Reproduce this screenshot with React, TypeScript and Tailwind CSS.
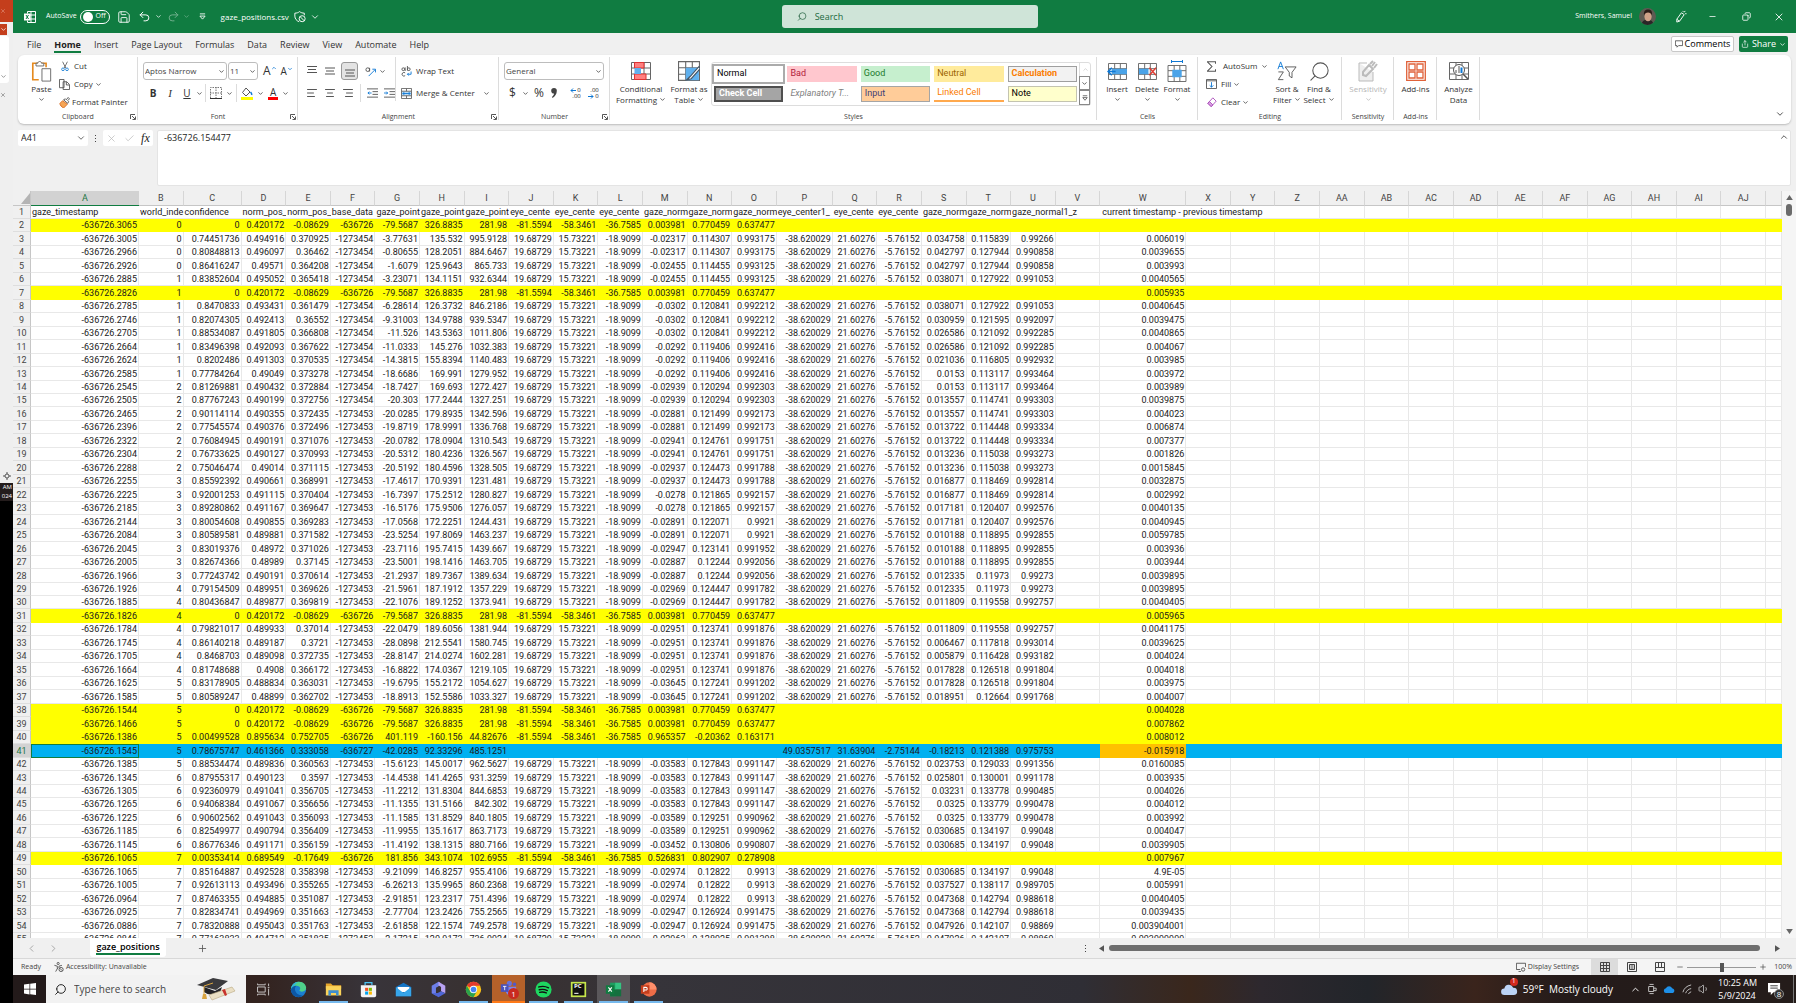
import React from 'react';
import {
  AlignCenter,
  AlignLeft,
  AlignRight,
  ChevronDown,
  ChevronLeft,
  ChevronRight,
  ChevronUp,
  Check,
  Copy,
  Minus,
  Plus,
  Redo2,
  Save,
  Search,
  Share,
  Undo2,
  Volume1,
  X,
} from 'lucide-react';

const YELLOW = 'yellow';
const BLUE = 'blue';

// A B C D E F G H I | M N O | S T U | W   (J-L and P-R are the same on every plain row)
const plainRows: Record<number, string> = {
  3: '-636726.3005 0 0.74451736 0.494916 0.370925 -1273454 -3.77631 135.532 995.9128 -0.02317 0.114307 0.993175 0.034758 0.115839 0.99266 0.006019',
  4: '-636726.2966 0 0.80848813 0.496097 0.36462 -1273454 -0.80655 128.2051 884.6467 -0.02317 0.114307 0.993175 0.042797 0.127944 0.990858 0.0039655',
  5: '-636726.2926 0 0.86416247 0.49571 0.364208 -1273454 -1.6079 125.9643 865.733 -0.02455 0.114455 0.993125 0.042797 0.127944 0.990858 0.003993',
  6: '-636726.2885 1 0.83852604 0.495052 0.365418 -1273454 -3.23071 134.1151 932.6344 -0.02455 0.114455 0.993125 0.038071 0.127922 0.991053 0.0040565',
  8: '-636726.2785 1 0.8470833 0.493431 0.361479 -1273454 -6.28614 126.3732 846.2186 -0.0302 0.120841 0.992212 0.038071 0.127922 0.991053 0.0040645',
  9: '-636726.2746 1 0.82074305 0.492413 0.36552 -1273454 -9.31003 134.9788 939.5347 -0.0302 0.120841 0.992212 0.030959 0.121595 0.992097 0.0039475',
  10: '-636726.2705 1 0.88534087 0.491805 0.366808 -1273454 -11.526 143.5363 1011.806 -0.0302 0.120841 0.992212 0.026586 0.121092 0.992285 0.0040865',
  11: '-636726.2664 1 0.83496398 0.492093 0.367622 -1273454 -11.0333 145.276 1032.383 -0.0292 0.119406 0.992416 0.026586 0.121092 0.992285 0.004067',
  12: '-636726.2624 1 0.8202486 0.491303 0.370535 -1273454 -14.3815 155.8394 1140.483 -0.0292 0.119406 0.992416 0.021036 0.116805 0.992932 0.003985',
  13: '-636726.2585 1 0.77784264 0.49049 0.373278 -1273454 -18.6686 169.991 1279.952 -0.0292 0.119406 0.992416 0.0153 0.113117 0.993464 0.003972',
  14: '-636726.2545 2 0.81269881 0.490432 0.372884 -1273454 -18.7427 169.693 1272.427 -0.02939 0.120294 0.992303 0.0153 0.113117 0.993464 0.003989',
  15: '-636726.2505 2 0.87767243 0.490199 0.372756 -1273454 -20.303 177.2444 1327.251 -0.02939 0.120294 0.992303 0.013557 0.114741 0.993303 0.0039875',
  16: '-636726.2465 2 0.90114114 0.490355 0.372435 -1273453 -20.0285 179.8935 1342.596 -0.02881 0.121499 0.992173 0.013557 0.114741 0.993303 0.004023',
  17: '-636726.2396 2 0.77545574 0.490376 0.372496 -1273453 -19.8719 178.9991 1336.768 -0.02881 0.121499 0.992173 0.013722 0.114448 0.993334 0.006874',
  18: '-636726.2322 2 0.76084945 0.490191 0.371076 -1273453 -20.0782 178.0904 1310.543 -0.02941 0.124761 0.991751 0.013722 0.114448 0.993334 0.007377',
  19: '-636726.2304 2 0.76733625 0.490127 0.370993 -1273453 -20.5312 180.4236 1326.567 -0.02941 0.124761 0.991751 0.013236 0.115038 0.993273 0.001826',
  20: '-636726.2288 2 0.75046474 0.49014 0.371115 -1273453 -20.5192 180.4596 1328.505 -0.02937 0.124473 0.991788 0.013236 0.115038 0.993273 0.0015845',
  21: '-636726.2255 3 0.85592392 0.490661 0.368991 -1273453 -17.4617 170.9391 1231.481 -0.02937 0.124473 0.991788 0.016877 0.118469 0.992814 0.0032875',
  22: '-636726.2225 3 0.92001253 0.491115 0.370404 -1273453 -16.7397 175.2512 1280.827 -0.0278 0.121865 0.992157 0.016877 0.118469 0.992814 0.002992',
  23: '-636726.2185 3 0.89280862 0.491167 0.369647 -1273453 -16.5176 175.9506 1276.057 -0.0278 0.121865 0.992157 0.017181 0.120407 0.992576 0.0040135',
  24: '-636726.2144 3 0.80054608 0.490855 0.369283 -1273453 -17.0568 172.2251 1244.431 -0.02891 0.122071 0.9921 0.017181 0.120407 0.992576 0.0040945',
  25: '-636726.2084 3 0.80589581 0.489881 0.371582 -1273453 -23.5254 197.8069 1463.237 -0.02891 0.122071 0.9921 0.010188 0.118895 0.992855 0.0059785',
  26: '-636726.2045 3 0.83019376 0.48972 0.371026 -1273453 -23.7116 195.7415 1439.667 -0.02947 0.123141 0.991952 0.010188 0.118895 0.992855 0.003936',
  27: '-636726.2005 3 0.82674366 0.48989 0.37145 -1273453 -23.5001 198.1416 1463.705 -0.02887 0.12244 0.992056 0.010188 0.118895 0.992855 0.003944',
  28: '-636726.1966 3 0.77243742 0.490191 0.370614 -1273453 -21.2937 189.7367 1389.634 -0.02887 0.12244 0.992056 0.012335 0.11973 0.99273 0.0039895',
  29: '-636726.1926 4 0.79154509 0.489951 0.369626 -1273453 -21.5961 187.1912 1357.229 -0.02969 0.124447 0.991782 0.012335 0.11973 0.99273 0.0039895',
  30: '-636726.1885 4 0.80436847 0.489877 0.369819 -1273453 -22.1076 189.1252 1373.941 -0.02969 0.124447 0.991782 0.011809 0.119558 0.992757 0.0040405',
  32: '-636726.1784 4 0.79821017 0.489933 0.37014 -1273453 -22.0479 189.6056 1381.944 -0.02951 0.123741 0.991876 0.011809 0.119558 0.992757 0.0041175',
  33: '-636726.1745 4 0.86140218 0.489187 0.3721 -1273453 -28.0898 212.5541 1580.745 -0.02951 0.123741 0.991876 0.006467 0.117818 0.993014 0.0039625',
  34: '-636726.1705 4 0.8468703 0.489098 0.372735 -1273453 -28.8147 214.0274 1602.281 -0.02951 0.123741 0.991876 0.005879 0.116428 0.993182 0.004024',
  35: '-636726.1664 4 0.81748688 0.4908 0.366172 -1273453 -16.8822 174.0367 1219.105 -0.02951 0.123741 0.991876 0.017828 0.126518 0.991804 0.004018',
  36: '-636726.1625 5 0.83178905 0.488834 0.363031 -1273453 -19.6795 155.2172 1054.627 -0.03645 0.127241 0.991202 0.017828 0.126518 0.991804 0.003975',
  37: '-636726.1585 5 0.80589247 0.48899 0.362702 -1273453 -18.8913 152.5586 1033.327 -0.03645 0.127241 0.991202 0.018951 0.12664 0.991768 0.004007',
  42: '-636726.1385 5 0.88534474 0.489836 0.360563 -1273453 -15.6123 145.0017 962.5627 -0.03583 0.127843 0.991147 0.023753 0.129033 0.991356 0.0160085',
  43: '-636726.1345 6 0.87955317 0.490123 0.3597 -1273453 -14.4538 141.4265 931.3259 -0.03583 0.127843 0.991147 0.025801 0.130001 0.991178 0.003935',
  44: '-636726.1305 6 0.92360979 0.491041 0.356705 -1273453 -11.2212 131.8304 844.6853 -0.03583 0.127843 0.991147 0.03231 0.133778 0.990485 0.004026',
  45: '-636726.1265 6 0.94068384 0.491067 0.356656 -1273453 -11.1355 131.5166 842.302 -0.03583 0.127843 0.991147 0.0325 0.133779 0.990478 0.004012',
  46: '-636726.1225 6 0.90602562 0.491043 0.356093 -1273453 -11.1585 131.8529 840.1805 -0.03589 0.129251 0.990962 0.0325 0.133779 0.990478 0.003992',
  47: '-636726.1185 6 0.82549977 0.490794 0.356409 -1273453 -11.9955 135.1617 863.7173 -0.03589 0.129251 0.990962 0.030685 0.134197 0.99048 0.004047',
  48: '-636726.1145 6 0.86776346 0.491171 0.356159 -1273453 -11.4192 138.1315 880.7166 -0.03452 0.130806 0.990807 0.030685 0.134197 0.99048 0.0039905',
  50: '-636726.1065 7 0.85164887 0.492528 0.358398 -1273453 -9.21099 146.8257 955.4106 -0.02974 0.12822 0.9913 0.030685 0.134197 0.99048 4.9E-05',
  51: '-636726.1005 7 0.92613113 0.493496 0.355265 -1273453 -6.26213 135.9965 860.2368 -0.02974 0.12822 0.9913 0.037527 0.138117 0.989705 0.005991',
  52: '-636726.0964 7 0.87463355 0.494885 0.351087 -1273453 -2.91851 123.2317 751.4396 -0.02974 0.12822 0.9913 0.047368 0.142794 0.988618 0.0040405',
  53: '-636726.0925 7 0.82834741 0.494969 0.351663 -1273453 -2.77704 123.2426 755.2565 -0.02947 0.126924 0.991475 0.047368 0.142794 0.988618 0.0039435',
  54: '-636726.0886 7 0.78320888 0.495043 0.351763 -1273453 -2.61858 122.1574 749.2578 -0.02947 0.126924 0.991475 0.047926 0.142107 0.98869 0.003904001',
  55: '-636726.0846 7 0.77163833 0.494712 0.351835 -1273453 -2.17215 120.9173 736.9924 -0.02963 0.128925 0.991398 0.047926 0.142107 0.98869 0.003999999',
};

// A-I, M-O and W of the rows that lost the second eye
const yellowRows: Record<number, string> = {
  2: '-636726.3065 0 0 0.420172 -0.08629 -636726 -79.5687 326.8835 281.98 0.003981 0.770459 0.637477',
  7: '-636726.2826 1 0 0.420172 -0.08629 -636726 -79.5687 326.8835 281.98 0.003981 0.770459 0.637477 0.005935',
  31: '-636726.1826 4 0 0.420172 -0.08629 -636726 -79.5687 326.8835 281.98 0.003981 0.770459 0.637477 0.005965',
  38: '-636726.1544 5 0 0.420172 -0.08629 -636726 -79.5687 326.8835 281.98 0.003981 0.770459 0.637477 0.004028',
  39: '-636726.1466 5 0 0.420172 -0.08629 -636726 -79.5687 326.8835 281.98 0.003981 0.770459 0.637477 0.007862',
  40: '-636726.1386 5 0.00499528 0.895634 0.752705 -636726 401.119 -160.156 44.82676 0.965357 -0.20362 0.163171 0.008012',
  49: '-636726.1065 7 0.00353414 0.689549 -0.17649 -636726 181.856 343.1074 102.6955 0.526831 0.802907 0.278908 0.007967',
};

const blueRow = [
  '-636726.1545', '5', '0.78675747', '0.461366', '0.333058', '-636727', '-42.0285', '92.33296', '485.1251',
  '', '', '', '', '', '', '49.0357517', '31.63904', '-2.75144', '-0.18213', '0.121388', '0.975753', '', '-0.015918',
];

const columns = [
  ...'ABCDEFGHIJKLMNOPQRSTUVWXYZ'.split(''),
  ...'ABCDEFGHIJ'.split('').map((c) => 'A' + c),
  '',
];

const headings = [
  'gaze_timestamp', 'world_inde', 'confidence', 'norm_pos_', 'norm_pos_', 'base_data', 'gaze_point',
  'gaze_point', 'gaze_point', 'eye_cente', 'eye_cente', 'eye_cente', 'gaze_norm', 'gaze_norm', 'gaze_norm',
  'eye_center1_', 'eye_cente', 'eye_cente', 'gaze_norm', 'gaze_norm',
];

function rowOf(n: number): { cells: string[]; tone?: string } {
  if (n === 41) return { cells: blueRow, tone: BLUE };
  if (yellowRows[n]) {
    const v = yellowRows[n].split(' ');
    return {
      cells: [...v.slice(0, 9), '-81.5594', '-58.3461', '-36.7585', ...v.slice(9, 12), '', '', '', '', '', '', '', v[12] ?? ''],
      tone: YELLOW,
    };
  }
  const v = plainRows[n].split(' ');
  return {
    cells: [
      ...v.slice(0, 9), '19.68729', '15.73221', '-18.9099', ...v.slice(9, 12),
      '-38.620029', '21.60276', '-5.76152', ...v.slice(12, 15), '', v[15],
    ],
  };
}

function Chev({ className = '' }: { className?: string }) {
  return <ChevronDown className={`size-[7px] shrink-0 ${className}`} strokeWidth={2.5} />;
}

function Launcher() {
  return (
    <button aria-label="More options" className="absolute right-[2px] bottom-[4px]">
      <svg viewBox="0 0 12 12" className="size-[6px]" fill="none" stroke="#444" strokeWidth="1.8">
        <path d="M1 10V1h9M4 4l6 6M11 5v6H5" />
      </svg>
    </button>
  );
}

function Group({ label, className, launcher, children }: {
  label?: string;
  className: string;
  launcher?: boolean;
  children: React.ReactNode;
}) {
  return (
    <section aria-label={label} className={`relative flex shrink-0 flex-col pt-[2px] ${className}`}>
      <div className="h-[54px]">{children}</div>
      <div className="h-[12px] text-center text-[7px] leading-[12px] text-[#444]">{label}</div>
      {launcher && <Launcher />}
      <span className="absolute top-[2px] right-0 h-[63px] w-px bg-[#dcdcdc]" />
    </section>
  );
}

function BigButton({ icon, top, bottom, caret, className = '' }: {
  icon: React.ReactNode;
  top: string;
  bottom?: string;
  caret?: boolean;
  className?: string;
}) {
  return (
    <button className={`flex flex-col items-center pt-[2px] leading-[11px] whitespace-nowrap ${className}`}>
      <span className="flex h-[24px] items-center">{icon}</span>
      <span>{top}</span>
      <span className="flex h-[11px] items-center gap-[2px]">
        {bottom}
        {caret && <Chev />}
      </span>
    </button>
  );
}

function SmallButton({ icon, label, caret, gap = 'gap-[2px]' }: {
  icon: React.ReactNode;
  label: string;
  caret?: boolean;
  gap?: string;
}) {
  return (
    <button className={`flex h-[18px] items-center whitespace-nowrap ${gap}`}>
      <span className="mr-[2px] flex w-[11px] justify-center">{icon}</span>
      {label}
      {caret && <Chev />}
    </button>
  );
}

function Combo({ label, value, className }: { label: string; value: string; className: string }) {
  return (
    <label className={`relative flex items-center ${className}`}>
      <select aria-label={label} className="h-[18px] w-full appearance-none rounded-[3px] border border-[#bdbdbd] bg-white px-px text-[8px] text-[#444]">
        <option>{value}</option>
      </select>
      <Chev className="pointer-events-none absolute right-[2px]" />
    </label>
  );
}

function GridIcon({ children, className = 'h-[18px] w-[20px]' }: { children?: React.ReactNode; className?: string }) {
  return (
    <svg viewBox="0 0 20 18" className={className} fill="none" stroke="#666">
      <path d="M.5.5h19v17H.5zM.5 6h19M.5 12h19M7 .5v17M13 .5v17" fill="#fff" />
      {children}
    </svg>
  );
}

function Sep() {
  return <span className="h-[18px] w-px bg-[#dcdcdc]" />;
}

function TitleBar() {
  return (
    <header className="flex h-[33px] items-center bg-[#107c41] text-[8px] text-white">
      <div className="flex flex-1 items-center pl-[11px]">
        <svg viewBox="0 0 12 12" className="mr-[10px] size-[12px]" fill="none" stroke="#fff" strokeWidth="1">
          <path d="M3.5 2.5v-2h8v11h-8v-2M7 .5v11M3.5 4H12M3.5 8H12" />
          <path d="M0 2.5h6.500v7H0z" fill="#fff" stroke="none" />
          <path d="m2 4 2.500 4M4.500 4 2 8" stroke="#107c41" />
        </svg>
        <label className="flex items-center gap-[3px] text-[7px]">
          AutoSave
          <span className="relative flex h-[14px] w-[30px] items-center rounded-full border border-white">
            <input type="checkbox" role="switch" className="absolute inset-0 appearance-none" />
            <span className="ml-[2px] size-[10px] rounded-full bg-white" />
            <span className="ml-[3px]">Off</span>
          </span>
        </label>
        <button aria-label="Save" className="ml-[7px]"><Save className="size-[14px]" strokeWidth={1.5} /></button>
        <button aria-label="Undo" className="ml-[7px] flex items-center gap-[4px]"><Undo2 className="size-[13px]" strokeWidth={1.8} /><Chev /></button>
        <button aria-label="Redo" className="ml-[5px] flex items-center gap-[3px] opacity-40"><Redo2 className="size-[13px]" strokeWidth={1.8} /><Chev /></button>
        <button aria-label="Customize toolbar" className="ml-[9px]">
          <svg viewBox="0 0 8 8" className="size-[7px]" fill="none" stroke="#fff"><path d="M1 1h6M1 3.500h6L4 7z" /></svg>
        </button>
        <span className="ml-[15px]">gaze_positions.csv</span>
        <button aria-label="File protection" className="ml-[5px] flex items-center gap-[4px]">
          <svg viewBox="0 0 14 14" className="size-[12px]" fill="none" stroke="#fff" strokeWidth="1.100">
            <path d="M6 12.500C3 11.500 1 9 1 6V2.500C3 2.500 5 2 6.500.7 8 2 10 2.500 12 2.500V5" />
            <circle cx="9.500" cy="9" r="3.500" /><path d="m7 6.500 5 5" />
          </svg>
          <ChevronDown className="size-[10px]" strokeWidth={2} />
        </button>
      </div>
      <label className="ml-[10px] flex h-[23px] w-[256px] items-center rounded-[3px] bg-[#cfe4d8] pl-[15px] text-[#1c5c3a]">
        <Search className="mr-[8px] size-[11px] -scale-x-100" strokeWidth={1.6} />
        <input aria-label="Search" placeholder="Search" className="w-full bg-transparent text-[9px] outline-none placeholder:text-[#1c6a41]" />
      </label>
      <div className="flex flex-1 items-center justify-end pr-[11px]">
        <span className="text-[7px]">Smithers, Samuel</span>
        <svg viewBox="0 0 16 16" className="ml-[7px] size-[17px] rounded-full">
          <path d="M0 0h16v16H0z" fill="#5d5a52" />
          <path d="M2 16c1-4 3-5 6-5s5 1 6 5z" fill="#2a2627" />
          <ellipse cx="8.500" cy="8" rx="3.400" ry="4.500" fill="#cfa188" />
          <path d="M4.800 7C4 3 6 1.500 8.500 1.500S13 3 12 7c-.6-2-1.500-2.800-3.500-2.800S5.500 5 4.800 7z" fill="#2b1d18" />
        </svg>
        <svg viewBox="0 0 14 14" className="ml-[18px] size-[13px]" fill="none" stroke="#fff">
          <path d="m3 10 5-7 3 2-5 7-3 1zM3 10l3 2M9.500 1l.5 1M12 1l-1 1.500M13.500 4 12 4" />
        </svg>
        <button aria-label="Minimize" className="ml-[21px]"><Minus className="size-[9px]" /></button>
        <button aria-label="Restore" className="ml-[25px]"><Copy className="size-[9px] rotate-90" strokeWidth={2.2} /></button>
        <button aria-label="Close" className="ml-[22px]"><X className="size-[12px]" strokeWidth={1.7} /></button>
      </div>
    </header>
  );
}

function Tabs() {
  const tabs = ['File', 'Home', 'Insert', 'Page Layout', 'Formulas', 'Data', 'Review', 'View', 'Automate', 'Help'];
  return (
    <nav className="flex h-[22px] items-center justify-between pr-[8px] pl-[14px] text-[9px]">
      <div className="flex gap-[13px] pt-[2px] leading-[13px]">
        {tabs.map((tab) => (
          <a
            key={tab}
            href="#"
            className={tab === 'Home' ? 'border-b-2 border-[#107c41] font-bold text-[#222]' : 'border-b-2 border-transparent text-[#333]'}
          >
            {tab}
          </a>
        ))}
      </div>
      <div className="flex gap-[5px]">
        <button className="flex h-[16px] w-[63px] items-center justify-center gap-[2px] rounded-[2px] border border-[#c8c8c8] bg-white">
          <svg viewBox="0 0 10 10" className="size-[8px]" fill="none" stroke="#444"><path d="M.5 1h9v6h-5L2.500 9V7h-2z" /></svg>
          Comments
        </button>
        <button className="flex h-[16px] w-[49px] items-center justify-center gap-[3px] rounded-[2px] bg-[#107c41] text-white">
          <Share className="size-[8px]" />
          Share
          <Chev />
        </button>
      </div>
    </nav>
  );
}

function FontGroup() {
  return (
    <Group label="Font" launcher className="w-[160px]">
      <div className="flex h-[22px] items-center pt-[6px] pl-[5px]">
        <Combo label="Font" value="Aptos Narrow" className="w-[84px]" />
        <Combo label="Font size" value="11" className="ml-px w-[30px]" />
        <button aria-label="Increase font size" className="ml-[5px] flex text-[12px] leading-none">A<ChevronUp className="size-[6px] text-[#0f78d4]" strokeWidth={3} /></button>
        <button aria-label="Decrease font size" className="ml-[4px] flex text-[10px] leading-none">A<ChevronDown className="size-[6px] text-[#0f78d4]" strokeWidth={3} /></button>
      </div>
      <div className="flex h-[28px] items-center pl-[11px]">
        <button className="w-[8px] text-[10px] font-bold">B</button>
        <button className="ml-[9px] w-[8px] font-['Liberation_Serif',serif] text-[11px] italic">I</button>
        <button className="ml-[9px] w-[8px] text-[10px] underline">U</button>
        <Chev className="mr-[2px] ml-[5px]" />
        <Sep />
        <svg viewBox="0 0 12 12" className="ml-[4px] size-[12px]" fill="none" stroke="#777" strokeDasharray="1.500 1">
          <path d="M.5 11V.5h11V11M6 0v11M0 6h12" /><path d="M0 11.500h12" stroke="#333" strokeDasharray="none" />
        </svg>
        <Chev className="mr-[3px] ml-[4px]" />
        <Sep />
        <svg viewBox="0 0 12 13" className="ml-[4px] h-[13px] w-[12px]" fill="none" stroke="#555">
          <path d="m5 1 4 4-4 4-3.500-3.500z" /><path d="M9.500 5c1 1 1.500 2 1 3" stroke="#0f78d4" strokeWidth="1.500" /><path d="M0 10h12v3H0z" fill="#ff0" stroke="none" />
        </svg>
        <Chev className="mx-[4px]" />
        <span className="border-b-[3px] border-[#f00] px-[2px] text-[10px] leading-[10px]">A</span>
        <Chev className="ml-[4px]" />
      </div>
    </Group>
  );
}

function LinesIcon({ shift }: { shift: string }) {
  return (
    <svg viewBox="0 0 10 12" className="h-[12px] w-[10px]" fill="none" stroke="#555">
      <path d={shift} />
    </svg>
  );
}

function IndentIcon({ flip }: { flip?: boolean }) {
  return (
    <svg viewBox="0 0 12 10" className="h-[10px] w-[11px]" fill="none" stroke="#555">
      <path d="M0 .5h12M6 3.500h6M6 6.500h6M0 9.500h12" />
      <path d={flip ? 'M0 5h4M2.500 3.500 4 5 2.500 6.500' : 'M5 5H1M2.500 3.500 1 5l1.500 1.500'} stroke="#0f78d4" />
    </svg>
  );
}

function AlignmentGroup() {
  return (
    <Group label="Alignment" launcher className="w-[201px]">
      <div className="flex">
        <div className="w-[98px] border-r border-[#dcdcdc]">
          <div className="flex h-[28px] items-center gap-[5px] pl-[7px]">
            <button aria-label="Top align" className="flex w-[13px] justify-center"><LinesIcon shift="M0 1.500h10M1 4.500h8M0 7.500h10" /></button>
            <button aria-label="Middle align" className="flex w-[13px] justify-center"><LinesIcon shift="M0 3h10M1 6h8M0 9h10" /></button>
            <button aria-label="Bottom align" className="flex h-[18px] w-[17px] items-center justify-center rounded-[3px] border border-[#999] bg-[#e3e3e3]"><LinesIcon shift="M0 5h10M1 8h8M0 11h10" /></button>
            <button aria-label="Orientation" className="ml-[2px] flex items-center gap-[3px]">
              <svg viewBox="0 0 12 12" className="size-[11px]" fill="none" stroke="#555"><circle cx="3" cy="4" r="2" /><path d="M5 2v4" /><path d="m4 11 7-7M8 3.500h3.500V7" stroke="#0f78d4" /></svg>
              <Chev />
            </button>
          </div>
          <div className="flex h-[16px] items-center gap-[6px] pl-[8px] text-[#444]">
            <AlignLeft className="size-[12px]" strokeWidth={1.8} />
            <AlignCenter className="size-[12px]" strokeWidth={1.8} />
            <AlignRight className="size-[12px]" strokeWidth={1.8} />
            <Sep />
            <IndentIcon />
            <IndentIcon flip />
          </div>
        </div>
        <div className="pl-[5px]">
          <button className="flex h-[28px] items-center gap-[4px]">
            <svg viewBox="0 0 12 12" className="size-[11px]" fill="none" stroke="#555"><circle cx="2.500" cy="3.500" r="1.500" /><path d="M4.500 1.500v4M7 0v5" /><circle cx="8.500" cy="3.500" r="1.500" /><path d="M4.500 7.500a2 2 0 1 0 0 3" /><path d="M11 6v3H7M8.500 7.500 7 9l1.500 1.500" stroke="#0f78d4" /></svg>
            Wrap Text
          </button>
          <button className="flex h-[16px] items-center gap-[4px] whitespace-nowrap">
            <svg viewBox="0 0 12 12" className="size-[11px]" fill="none" stroke="#666"><path d="M.5.5h11v11H.5zM6 .5v11" /><path d="M.5 3.500h11v5H.5z" fill="#b9dcf7" /><path d="M2 6h8M3.500 4.500 2 6l1.500 1.500M8.500 4.500 10 6 8.500 7.500" stroke="#0f78d4" /></svg>
            Merge &amp; Center
            <Chev className="ml-[4px]" />
          </button>
        </div>
      </div>
    </Group>
  );
}

function NumberGroup() {
  return (
    <Group label="Number" launcher className="w-[111px]">
      <div className="flex h-[28px] items-center pl-[5px]">
        <Combo label="Number format" value="General" className="w-[100px]" />
      </div>
      <div className="flex h-[16px] items-center pl-[10px] text-[12px]">
        <button aria-label="Accounting format" className="flex items-center gap-[6px]">$<Chev /></button>
        <button className="ml-[5px]">%</button>
        <button aria-label="Comma style" className="mx-[7px]">
          <svg viewBox="0 0 6 10" className="h-[10px] w-[6px]" fill="#444"><path d="M3 0a2.800 2.800 0 0 1 2.800 3C5.800 6 4 8.500 1.500 10L1 9c1.200-1 2-2.200 2-3.400A2.800 2.800 0 1 1 3 0z" /></svg>
        </button>
        <span className="mr-[4px]"><Sep /></span>
        <button aria-label="Increase decimal" className="mr-[5px] flex w-[13px] flex-col items-end text-[6px] leading-[6px] text-[#222]">
          <span className="flex items-center gap-px">
            <svg viewBox="0 0 6 5" className="h-[5px] w-[6px]" fill="none" stroke="#0f78d4"><path d="M6 2.500H1M3 .5l-2 2 2 2" /></svg>
            0
          </span>
          <span>.00</span>
        </button>
        <button aria-label="Decrease decimal" className="flex w-[13px] flex-col items-end text-[6px] leading-[6px] text-[#222]">
          <span>.00</span>
          <span className="flex items-center gap-px">
            <svg viewBox="0 0 6 5" className="h-[5px] w-[6px]" fill="none" stroke="#0f78d4"><path d="M0 2.500h5M3 .5l2 2-2 2" /></svg>
            0
          </span>
        </button>
      </div>
    </Group>
  );
}

const cellStyles = [
  ['Normal', 'bg-white text-black outline outline-2 outline-[#ababab]'],
  ['Bad', 'bg-[#ffc7ce] text-[#b0203a]'],
  ['Good', 'bg-[#c6efce] text-[#1d7a2c]'],
  ['Neutral', 'bg-[#ffeb9c] text-[#9c6500]'],
  ['Calculation', 'border border-[#9f9f9f] bg-[#f2f2f2] font-bold text-[#fa7d00]'],
  ['Check Cell', 'border-2 border-[#4f4f4f] bg-[#a5a5a5] font-bold text-white'],
  ['Explanatory T...', 'text-[#7f7f7f] italic'],
  ['Input', 'border border-[#a5a5a5] bg-[#ffcc99] text-[#3f3f76]'],
  ['Linked Cell', 'border-b-2 border-[#ffa94d] text-[#fa7d00]'],
  ['Note', 'border border-[#c4c4b0] bg-[#ffffcc] text-black'],
];

function StylesGroup() {
  return (
    <Group label="Styles" className="w-[487px]">
      <div className="flex">
        <BigButton
          className="ml-[3px] w-[56px]"
          icon={<GridIcon><path d="M3.500.5H13V6H3.500zM3.500 12H15v5.500H3.500z" fill="#ff8080" stroke="#d33" /><path d="M3.500 6H10v6H3.500z" fill="#5fb0ee" stroke="none" /></GridIcon>}
          top="Conditional" bottom="Formatting" caret
        />
        <BigButton
          className="w-[40px]"
          icon={<GridIcon className="h-[20px] w-[22px]"><path d="M7 6h12v11.500H7z" fill="#5fb0ee" stroke="none" /><path d="m19 5-8 9-3 3 4-1 8-9z" fill="#fff" stroke="#456" /></GridIcon>}
          top="Format as" bottom="Table" caret
        />
        <div className="mt-[5px] ml-[2px] flex h-[44px] w-[380px] rounded-[3px] border border-[#ddd]">
          <div className="grid flex-1 grid-cols-5 gap-x-[4px] gap-y-[3px] px-[2px] py-[3px] font-['Roboto',sans-serif] text-[9px]">
            {cellStyles.map(([name, tone]) => (
              <button key={name} className={`flex h-[16px] items-center px-[3px] whitespace-nowrap ${tone}`}>{name}</button>
            ))}
          </div>
          <div className="flex w-[11px] flex-col">
            <button aria-label="Previous styles" className="flex flex-1 items-center justify-center border-l border-[#ddd] text-[#bbb]"><ChevronUp className="size-[7px]" /></button>
            <button aria-label="Next styles" className="flex flex-1 items-center justify-center border border-[#888]"><Chev /></button>
            <button aria-label="All styles" className="flex flex-1 items-center justify-center border border-[#888]">
              <svg viewBox="0 0 8 8" className="size-[6px]" fill="none" stroke="#444"><path d="M1 1h6M1 3.500h6L4 7z" /></svg>
            </button>
          </div>
        </div>
      </div>
    </Group>
  );
}

function Ribbon() {
  return (
    <div className="mr-[5px] ml-[5px] flex h-[69px] overflow-hidden rounded-[6px] bg-white text-[8px] text-[#333] shadow-[0_1px_2px_#bbb]">
      <Group label="Clipboard" launcher className="w-[120px]">
        <div className="flex">
          <BigButton
            className="w-[41px] pl-[6px]"
            icon={
              <svg viewBox="0 0 22 24" className="h-[22px] w-[21px]" fill="none">
                <path d="M8 21.500H1.500v-18H16V8" stroke="#e58a1f" strokeWidth="1.800" />
                <path d="M5 3.500h2C7 1 11 1 11 3.500h2.500v3H5z" fill="#fff" stroke="#666" />
                <path d="M11.500 9.500h9.500V23h-9.500z" fill="#fff" stroke="#666" />
              </svg>
            }
            top="Paste" caret
          />
          <div className="flex flex-col">
            <SmallButton label="Cut" icon={<svg viewBox="0 0 10 12" className="h-[11px] w-[8px]" fill="none" stroke="#555"><path d="m2 0 4 8M8 0 4 8" /><circle cx="2.500" cy="9.500" r="1.700" stroke="#0f78d4" /><circle cx="7.500" cy="9.500" r="1.700" stroke="#0f78d4" /></svg>} />
            <SmallButton label="Copy" caret gap="gap-[2px]" icon={<svg viewBox="0 0 12 12" className="size-[11px]" fill="#fff" stroke="#555"><path d="M.5.5h5v9h-5zM4.500 3h4l3 3v5.500h-7zM8 3v3.500h3" /></svg>} />
            <SmallButton label="Format Painter" gap="gap-0" icon={<svg viewBox="0 0 12 12" className="size-[11px]" fill="none" stroke="#555"><path d="m1 7 3-3 5 4-4 4C3 11 1 9 1 7z" fill="#f6a656" stroke="#d9691e" /><path d="m5 3 2-1 1 1 2-2.500L11.500 2 9.500 4l1 1-1 2z" fill="#fff" /></svg>} />
          </div>
        </div>
      </Group>
      <FontGroup />
      <AlignmentGroup />
      <NumberGroup />
      <StylesGroup />
      <Group label="Cells" className="w-[101px]">
        <div className="flex pl-[5px]">
          <BigButton className="w-[30px]" top="Insert" caret icon={<GridIcon className="h-[17px] w-[21px]"><path d="M4 6h16v6H4z" fill="#4aa3e8" stroke="none" /><path d="M8 9H0M4 5 0 9l4 4" stroke="#0f78d4" strokeWidth="1.500" /></GridIcon>} />
          <BigButton className="w-[30px]" top="Delete" caret icon={<GridIcon className="h-[17px] w-[21px]"><path d="M1 6h10v6H1z" fill="#4aa3e8" stroke="none" /><path d="m12 5 7 8M19 5l-7 8" stroke="#e03c31" strokeWidth="1.500" /></GridIcon>} />
          <BigButton
            className="w-[30px]" top="Format" caret
            icon={
              <span className="flex flex-col items-center gap-[2px]">
                <svg viewBox="0 0 12 3" className="h-[3px] w-[12px]" fill="none" stroke="#0f78d4"><path d="M.5 0v3M11.500 0v3M.5 1.500h11" /></svg>
                <GridIcon className="h-[17px] w-[20px]"><path d="M5 5h10v8H5z" fill="#4aa3e8" stroke="none" /></GridIcon>
              </span>
            }
          />
        </div>
      </Group>
      <Group label="Editing" className="w-[144px]">
        <div className="flex">
          <div className="flex w-[72px] flex-col pl-[8px]">
            <SmallButton label="AutoSum" caret gap="gap-[4px]" icon={<svg viewBox="0 0 10 12" className="h-[11px] w-[9px]" fill="none" stroke="#555" strokeWidth="1.200"><path d="M9.500 3V.8h-9L5.500 6l-5 5.200h9V9" /></svg>} />
            <SmallButton label="Fill" caret icon={<svg viewBox="0 0 12 11" className="h-[10px] w-[11px]" fill="none" stroke="#555"><path d="M.5.5h11v10H.5zM.5 2h11" /><path d="M6 3.500V9M4 7l2 2 2-2" stroke="#0f78d4" /></svg>} />
            <SmallButton label="Clear" caret icon={<svg viewBox="0 0 12 12" className="size-[10px]" fill="none" stroke="#a33cb5"><path d="m7 1 4 4-6 6.500L1 7.500z" /><path d="m3 5.500 4 4-2 2L1 7.500z" fill="#d9a3e2" /></svg>} />
          </div>
          <BigButton
            className="w-[34px]"
            icon={<svg viewBox="0 0 22 22" className="size-[20px]" fill="none" stroke="#555"><path d="m1 9 3-8 3 8M2 6h4" stroke="#0f78d4" /><path d="M1.500 12H7l-5.500 8.500H7M9 6.500h12l-4.500 6v6l-3-2v-4z" /></svg>}
            top="Sort &" bottom="Filter" caret
          />
          <BigButton
            className="w-[30px]"
            icon={<Search className="size-[23px] -scale-x-100 text-[#555]" strokeWidth={1.1} />}
            top="Find &" bottom="Select" caret
          />
        </div>
      </Group>
      <Group label="Sensitivity" className="w-[52px]">
        <BigButton
          className="w-full text-[#b5b5b5]"
          icon={<svg viewBox="0 0 20 22" className="h-[22px] w-[20px]" fill="none" stroke="#bbb"><path d="M1 3h8M15 12v9H1V3" fill="#eee" /><path d="m5 12 6-7 4 4-7 7-3-1zM12 4l3-3M14 6l3-4M16 8l3-4" strokeWidth="2" /></svg>}
          top="Sensitivity" caret
        />
      </Group>
      <Group label="Add-ins" className="w-[43px]">
        <BigButton
          className="w-full"
          icon={<svg viewBox="0 0 20 20" className="size-[20px]" fill="none" stroke="#e0623a"><path d="M.7.7h18.600v18.600H.7zM3 3h6v6H3zM11 3h6v6h-6zM3 11h6v6H3zM11 11h6v6h-6z" strokeWidth="1.300" /></svg>}
          top="Add-ins"
        />
      </Group>
      <Group className="w-[43px]">
        <BigButton
          className="w-full"
          icon={<GridIcon className="h-[20px] w-[20px]"><circle cx="10" cy="8" r="5.500" fill="#fff" stroke="#555" /><path d="m14 12 5 5" stroke="#555" strokeWidth="1.500" /><path d="M7 11V8M10 11V4" stroke="#555" /><path d="M11.500 5.500h2V11h-2z" fill="#0f78d4" stroke="none" /></GridIcon>}
          top="Analyze" bottom="Data"
        />
      </Group>
      <button aria-label="Collapse ribbon" className="mt-auto mr-[6px] mb-[5px] ml-auto"><ChevronDown className="size-[10px]" /></button>
    </div>
  );
}

function FormulaBar() {
  return (
    <div className="mx-[5px] mt-[6px] flex h-[56px] items-start text-[9px] text-[#222]">
      <label className="relative flex h-[16px] w-[70px] items-center rounded-[2px] bg-white">
        <input aria-label="Name box" defaultValue="A41" className="w-full px-[3px] outline-none" />
        <ChevronDown className="absolute right-[2px] size-[10px]" strokeWidth={1.6} />
      </label>
      <span className="flex h-[16px] w-[15px] flex-col items-center justify-center gap-[2px]">
        <i className="size-[1px] bg-[#444]" /><i className="size-[1px] bg-[#444]" /><i className="size-[1px] bg-[#444]" />
      </span>
      <div className="flex h-[16px] w-[50px] items-center justify-around rounded-[2px] bg-white">
        <X className="size-[11px] text-[#bbb]" strokeWidth={1.6} />
        <Check className="size-[11px] text-[#bbb]" strokeWidth={1.6} />
        <span className="font-['Liberation_Serif',serif] text-[12px] leading-none italic">fx</span>
      </div>
      <div className="ml-[4px] flex h-[56px] flex-1 rounded-[2px] border border-[#e4e4e4] bg-white">
        <textarea aria-label="Formula" defaultValue="-636726.154477" className="h-full flex-1 resize-none px-[6px] py-px leading-[12px] outline-none" />
        <ChevronUp className="mt-px mr-px size-[10px]" strokeWidth={1.8} />
      </div>
    </div>
  );
}

function Sheet() {
  const rows = Array.from({ length: 54 }, (_, i) => i + 2);
  return (
    <div className="mt-[5px] flex min-h-0 flex-1">
      <div className="flex-1 overflow-hidden bg-white">
        <table className="w-full table-fixed border-separate border-spacing-0 font-['Roboto',sans-serif] text-[9px] leading-[12px] whitespace-nowrap text-[#1a1a1a]">
          <colgroup>
            <col className="w-[18px]" />
            {columns.map((c, i) => (
              <col
                key={i}
                className={{ A: 'w-[108px]', C: 'w-[58px]', P: 'w-[56px]', W: 'w-[86px]', '': 'w-[16px]' }[c]}
              />
            ))}
          </colgroup>
          <thead>
            <tr className="h-[15px] bg-[#f0f0f0] text-[#444]">
              <th className="border-r border-b border-[#c6c6c6] p-0">
                <svg viewBox="0 0 10 12" className="ml-auto h-[11px] w-[9px]" fill="#b4b4b4"><path d="M10 0v12H0z" /></svg>
              </th>
              {columns.map((c, i) => (
                <th
                  key={i}
                  className={
                    c === 'A'
                      ? 'border-b border-[#107c41] bg-[#d2d2d2] p-0 font-normal text-[#1a7443]'
                      : 'border-r border-b border-r-[#d6d6d6] border-b-[#c6c6c6] p-0 font-normal'
                  }
                >
                  {c}
                </th>
              ))}
            </tr>
          </thead>
          <tbody>
            <tr className="h-[13px]">
              <th className="border-r border-b border-r-[#c6c6c6] border-b-[#dedede] bg-[#f0f0f0] p-0 font-normal text-[#444]">1</th>
              {headings.map((h, i) => (
                <td key={i} className="overflow-hidden border-b border-[#e8e8e8] p-0 pl-px">{h}</td>
              ))}
              <td colSpan={2} className="border-b border-[#e8e8e8] p-0 pl-px">gaze_normal1_z</td>
              <td colSpan={3} className="border-b border-[#e8e8e8] p-0 pl-[2px]">current timestamp - previous timestamp</td>
              {columns.slice(25).map((c, i) => (
                <td key={i} className="border-r border-b border-[#e8e8e8] p-0" />
              ))}
            </tr>
            {rows.map((n) => {
              const { cells, tone } = rowOf(n);
              const selected = n === 41;
              return (
                <tr
                  key={n}
                  className={`${(n % 15) % 2 === 1 ? 'h-[14px]' : 'h-[13px]'} ${tone === YELLOW ? 'bg-[#ffff00]' : tone === BLUE ? 'bg-[#00b0f0]' : ''}`}
                >
                  <th
                    className={`border-r border-b border-r-[#c6c6c6] border-b-[#dedede] p-0 font-normal ${selected ? 'bg-[#d2d2d2] text-[#1a7443]' : 'bg-[#f0f0f0] text-[#444]'}`}
                  >
                    {n}
                  </th>
                  {columns.map((c, i) => (
                    <td
                      key={i}
                      className={`p-0 pr-px text-right ${tone ? 'border-r border-b border-transparent' : 'border-r border-b border-[#e8e8e8]'} ${selected && i === 22 ? 'bg-[#ffc000]' : ''} ${selected && i === 0 ? 'outline outline-1 -outline-offset-1 outline-[#107c41]' : ''}`}
                    >
                      {cells[i]}
                    </td>
                  ))}
                </tr>
              );
            })}
          </tbody>
        </table>
      </div>
      <div className="flex w-[14px] flex-col items-center bg-[#f5f5f5] py-[4px]">
        <svg viewBox="0 0 8 6" className="h-[5px] w-[7px]" fill="#666"><path d="M4 0 8 6H0z" /></svg>
        <span className="mt-[4px] h-[12px] w-[6px] rounded-full bg-[#6b6b6b]" />
        <svg viewBox="0 0 8 6" className="mt-auto h-[5px] w-[7px]" fill="#666"><path d="M4 6 8 0H0z" /></svg>
      </div>
    </div>
  );
}

function SheetTabs() {
  return (
    <div className="flex h-[21px] items-center border-b border-[#d8d8d8] text-[9px]">
      <ChevronLeft className="ml-[13px] size-[11px] text-[#999]" strokeWidth={1.8} />
      <ChevronRight className="ml-[11px] size-[11px] text-[#999]" strokeWidth={1.8} />
      <button className="ml-[31px] flex h-[19px] w-[76px] justify-center self-start rounded-b-[3px] bg-white pt-[2px]">
        <span className="h-[15px] border-b-2 border-[#107c41] leading-[14px] font-semibold">gaze_positions</span>
      </button>
      <button aria-label="New sheet" className="ml-[31px]"><Plus className="size-[11px] text-[#555]" strokeWidth={1.8} /></button>
      <div className="ml-auto flex w-[714px] items-center">
        <span className="flex w-[6px] flex-col items-center gap-[2px]">
          <i className="size-[1px] bg-[#444]" /><i className="size-[1px] bg-[#444]" /><i className="size-[1px] bg-[#444]" />
        </span>
        <svg viewBox="0 0 6 8" className="ml-[11px] h-[7px] w-[5px]" fill="#555"><path d="M0 4 6 0v8z" /></svg>
        <span className="ml-[5px] h-[6px] flex-1 rounded-full bg-[#6e6e6e]" />
        <svg viewBox="0 0 6 8" className="mr-[16px] ml-[15px] h-[7px] w-[5px]" fill="#555"><path d="M6 4 0 0v8z" /></svg>
      </div>
    </div>
  );
}

function StatusBar() {
  return (
    <div className="flex h-[16px] items-center bg-[#f4f4f4] pl-[8px] text-[7px] whitespace-nowrap text-[#444]">
      Ready
      <svg viewBox="0 0 12 12" className="mr-[2px] ml-[13px] size-[10px]" fill="none" stroke="#444">
        <circle cx="5" cy="1.800" r="1.300" /><path d="M.5 4 4 5v3l-2 3.500M9.500 4 6 5v2M4 8l1-1" /><circle cx="8.500" cy="9" r="2.500" /><path d="m7 7.500 3 3" />
      </svg>
      Accessibility: Unavailable
      <button className="mr-[12px] ml-auto flex items-center gap-[2px]">
        <svg viewBox="0 0 12 12" className="size-[10px]" fill="none" stroke="#444"><path d="M5 9H.5V1.500h11V6M3 11.500h3" /><circle cx="8.500" cy="9" r="2" /></svg>
        Display Settings
      </button>
      <button aria-label="Normal view" className="flex h-full w-[27px] items-center justify-center bg-[#dcdcdc]">
        <svg viewBox="0 0 10 10" className="size-[10px]" fill="none" stroke="#444"><path d="M.5.500h9v9h-9zM.5 3.500h9M.5 6.500h9M3.500.5v9M6.500.5v9" /></svg>
      </button>
      <button aria-label="Page layout view" className="flex w-[28px] justify-center">
        <svg viewBox="0 0 10 10" className="size-[10px]" fill="none" stroke="#444"><path d="M.5.5h9v9h-9zM2.500 2.500h5v5h-5zM3.500 4h3M3.500 6h3" /></svg>
      </button>
      <button aria-label="Page break view" className="flex w-[28px] justify-center">
        <svg viewBox="0 0 10 10" className="size-[10px]" fill="none" stroke="#444"><path d="M.5.500h9v9h-9zM3.500.5v5h3v-5M.5 5.500h9" /></svg>
      </button>
      <Minus className="ml-[2px] size-[8px]" />
      <input
        type="range"
        aria-label="Zoom"
        defaultValue={50}
        className="mx-[3px] h-[10px] w-[69px] appearance-none bg-[linear-gradient(#999,#999)] bg-[length:100%_1px] bg-center bg-no-repeat [&::-webkit-slider-thumb]:h-[9px] [&::-webkit-slider-thumb]:w-[4px] [&::-webkit-slider-thumb]:appearance-none [&::-webkit-slider-thumb]:bg-[#555]"
      />
      <Plus className="size-[8px]" />
      <span className="mr-[4px] ml-[7px]">100%</span>
    </div>
  );
}

const apps: { name: string; on?: boolean; tone?: string; art: React.ReactNode }[] = [
  { name: 'Task View', art: <path d="M3 3v1.500h9V3M3 17v-1.500h9V17M3 7h9v6H3zM16 3v3M16 9v8M15 7.500h2" fill="none" stroke="#ddd" /> },
  {
    name: 'Edge',
    art: (
      <>
        <circle cx="10" cy="10" r="9" fill="#1b7fd0" />
        <path d="M1 10C2 3 7 1 11 1c5 0 8 4 8 7 0 3-2 4.500-5 4.500-2 0-3-.8-3-1.500 0-.5 1-1 1-2.500C12 6.500 10 5.500 7.500 5.500 4 5.500 2 8 1 10z" fill="#4fd08a" />
        <path d="M1 10C2 4 6 1.500 9.500 1.300 7 3 6 4 5 6 3.500 6.800 2 8 1 10z" fill="#2fb4dc" />
        <path d="M1 10c1-3 3.500-4.500 6.500-4.500C6 7 5.500 9 6 11c.8 4 5 6.500 9 6-4 3.500-13 2.500-14-7z" fill="#0d57a5" />
      </>
    ),
  },
  {
    name: 'File Explorer', on: true,
    art: <><path d="M1 3h6l2 2h10v4H1z" fill="#e8a72c" /><path d="M1 6h18v11H1z" fill="#fbd35a" /><path d="M4 17v-6h12v6h-3v-3H7v3z" fill="#3e8ed0" /></>,
  },
  {
    name: 'Store',
    art: <><path d="M6 5V2h8v3" fill="none" stroke="#4cc2f1" strokeWidth="1.500" /><path d="M1 5h18v12q0 2-2 2H3q-2 0-2-2z" fill="#f3f3f3" /><path d="M6 8h3.600v3.600H6z" fill="#f25022" /><path d="M10.400 8H14v3.600h-3.600z" fill="#7fba00" /><path d="M6 12.400h3.600V16H6z" fill="#00a4ef" /><path d="M10.400 12.400H14V16h-3.600z" fill="#ffb900" /></>,
  },
  { name: 'Mail', art: <><path d="M1 7l9-5 9 5v11H1z" fill="#1273c4" /><path d="M3 7h14v6H3z" fill="#fff" /><path d="m1 7 9 7 9-7v11H1z" fill="#36a5ea" /></> },
  {
    name: 'Microsoft 365',
    art: <><path d="M10 1 2 5.500v9L7 17V8l5-3V2z" fill="#6d7fe8" /><path d="m10 1 8 4.500v9L13 12V7l-3-2z" fill="#b9a2f2" /><path d="m2 14.500 8 4.500 8-4.500-5-2.500-4 2z" fill="#4f66d6" /></>,
  },
  {
    name: 'Chrome', on: true,
    art: <><circle cx="10" cy="10" r="9" fill="#fbc116" /><path d="M10 10 2.200 5.500A9 9 0 0 1 17.800 5.500H10z" fill="#e33b2e" /><path d="M2.200 5.500A9 9 0 0 0 10 19l4-7-8 0z" fill="#2ba24c" /><circle cx="10" cy="10" r="4.300" fill="#fff" /><circle cx="10" cy="10" r="3.300" fill="#4285f4" /></>,
  },
  {
    name: 'Teams', tone: 'border-b-2 border-[#ff7a18] bg-[#b5612a]',
    art: <><circle cx="11" cy="4" r="3" fill="#6a72d8" /><circle cx="17" cy="5" r="2" fill="#5059c9" /><path d="M7 8h12v6q-1 4-6 4t-6-4z" fill="#7b83eb" /><path d="M1 5h9v9H1z" fill="#4b53bc" /><path d="M3.500 7.500h4M5.500 7.500V12" stroke="#fff" /></>,
  },
  { name: 'Spotify', on: true, art: <><circle cx="10" cy="10" r="9.500" fill="#1ed760" /><path d="M4.500 7c4-1.200 8-.8 11.500 1M5 10.300c3.500-1 6.500-.6 9.500 1M5.500 13.300c3-.8 5.300-.4 7.800.8" fill="none" stroke="#111" strokeWidth="1.600" strokeLinecap="round" /></> },
  { name: 'PyCharm', on: true, art: <><path d="M1 1h18v18H1z" fill="#c6e64b" /><path d="M3 3h14v14H3z" fill="#111" /><path d="M5 14.500h5" stroke="#fff" strokeWidth="1.200" /></> },
  {
    name: 'Excel', on: true, tone: 'bg-[#5b585b]',
    art: <><path d="M6 2h7v16H6z" fill="#1d9e5f" /><path d="M12 2h7v8h-7z" fill="#33c481" /><path d="M6 10h13v8H6z" fill="#15703f" /><path d="M1 5h10v10H1z" fill="#107c41" /><path d="m4 7.500 4 5M8 7.500l-4 5" stroke="#fff" strokeWidth="1.300" /></>,
  },
  {
    name: 'PowerPoint', on: true,
    art: <><circle cx="11" cy="10" r="8.500" fill="#ed6c47" /><path d="M11 1.500A8.500 8.500 0 0 1 19.500 10H11z" fill="#ff8f6b" /><path d="M1 5h10v10H1z" fill="#c43e1c" /><path d="M4.500 13V7.500H7q1.500 0 1.500 1.600T7 10.700H4.500" fill="none" stroke="#fff" strokeWidth="1.200" /></>,
  },
];

function Taskbar() {
  return (
    <footer className="flex h-[28px] items-center bg-[linear-gradient(90deg,#33231f_0%,#33231f_14%,#38343a_20%,#38302f_27%,#36343a_36%,#2f2e35_60%,#3a271c_66%,#2d282e_70%,#22252a_76%,#3a241c_82%,#241b1a_87%,#241c1a_100%)] text-white">
      <button aria-label="Start" className="flex h-full w-[33px] items-center justify-center bg-[#231a1a]">
        <svg viewBox="0 0 12 12" className="size-[12px]" fill="#fff"><path d="M0 1.500 5.500.8v5H0zM6.200.7 12 0v5.800H6.200zM0 6.400h5.500v5L0 10.600zM6.200 6.400H12V12l-5.800-.7z" /></svg>
      </button>
      <label className="relative flex h-full w-[200px] items-center bg-[#f2f2f2] pl-[8px]">
        <Search className="size-[13px] shrink-0 -scale-x-100 text-[#222]" strokeWidth={1.8} />
        <input aria-label="Windows search" placeholder="Type here to search" className="ml-[7px] w-[110px] bg-transparent text-[10px] outline-none placeholder:text-[#444]" />
        <svg viewBox="0 0 40 24" className="ml-[12px] h-[24px] w-[40px]">
          <path d="m1 8 16-7 15 3-12 9z" fill="#3a3a3d" />
          <path d="M8 10v5q6 5 16 1l2-6-7 4z" fill="#242427" />
          <path d="M17 6 8 9v10" fill="none" stroke="#d9a441" />
          <path d="M7 17h3l1 5H6z" fill="#d9a441" />
          <path d="m13 18 23-8 3 4-23 9z" fill="#eadfc4" stroke="#b9a780" strokeWidth=".6" />
          <path d="m26 13 3 6 2-1-2-6z" fill="#c8322b" />
        </svg>
      </label>
      {apps.map((app) => (
        <button
          key={app.name}
          aria-label={app.name}
          className={`relative mx-px flex h-full w-[33px] items-center justify-center ${app.tone ?? ''}`}
        >
          <svg viewBox="0 0 20 20" className="size-[17px]">{app.art}</svg>
          {app.name === 'PyCharm' && <span className="absolute top-[8px] left-[12px] text-[6px] leading-[6px] font-bold">PC</span>}
          {app.name === 'Teams' && (
            <span className="absolute top-[13px] right-[6px] flex size-[11px] items-center justify-center rounded-full bg-[#c92a1f] text-[8px]">1</span>
          )}
          {app.on && <span className="absolute inset-x-[2px] bottom-0 h-[2px] bg-[#76b9ed]" />}
        </button>
      ))}
      <div className="ml-auto flex items-center text-[10px] whitespace-nowrap">
        <span className="relative mr-[5px]">
          <svg viewBox="0 0 18 14" className="h-[13px] w-[18px]"><path d="M4 13a3.500 3.500 0 0 1 0-7 5 5 0 0 1 9.500-1A4 4 0 0 1 14 13z" fill="#bcd3f5" /></svg>
          <span className="absolute -top-[5px] right-0 flex size-[8px] items-center justify-center rounded-full bg-[#d1281d] text-[7px]">1</span>
        </span>
        59°F&nbsp; Mostly cloudy
        <ChevronUp className="ml-[17px] size-[11px]" />
        <svg viewBox="0 0 12 14" className="ml-[6px] h-[12px] w-[10px]" fill="none" stroke="#ddd"><path d="M2 4h6v6H2zM8 6h3v3H8M3 1.500h5M3 12.500h5" /></svg>
        <svg viewBox="0 0 14 10" className="ml-[6px] h-[9px] w-[13px]"><path d="M3 9a2.800 2.800 0 0 1 0-5.500A4 4 0 0 1 10 3.500 3 3 0 0 1 11 9z" fill="#1e90e8" /></svg>
        <svg viewBox="0 0 12 12" className="ml-[6px] size-[11px]" fill="none" stroke="#ccc"><path d="M1 9C2 5 5 2 10 1M4 10c.8-2.500 3-4.500 6-5M7 11c.5-1.300 1.500-2 3-2.500" /></svg>
        <Volume1 className="ml-[5px] size-[12px] text-[#ccc]" strokeWidth={1.6} />
        <span className="ml-[8px] w-[38px] text-center text-[9px] leading-[13px]">10:25 AM<br />5/9/2024</span>
        <span className="relative mr-[12px] ml-[12px]">
          <svg viewBox="0 0 14 14" className="size-[13px]"><path d="M0 0h13v10H6l-3 3v-3H0z" fill="#fff" /><path d="M2.500 3h8M2.500 5.500h8" stroke="#333" /></svg>
          <span className="absolute top-[6px] left-[6px] flex size-[10px] items-center justify-center rounded-full border border-[#888] bg-[#333] text-[8px]">8</span>
        </span>
        <span className="mr-[2px] h-[28px] w-px bg-[#777]" />
      </div>
    </footer>
  );
}

// Sliver of the window that sits behind Excel on the left
function BackWindow() {
  return (
    <aside className="flex w-[13px] shrink-0 flex-col overflow-hidden bg-[#efefef] text-[#555]">
      <div className="flex h-[22px] items-center bg-[#c43e1c]"><X className="size-[6px] text-[#e9a390]" /></div>
      <div className="mt-[2px] flex h-[11px] w-[7px] items-center bg-[#c43e1c]"><Chev className="text-white" /></div>
      <div className="mt-px flex h-[47px] w-[9px] items-end rounded-r-[3px] bg-white pb-[3px]"><ChevronDown className="size-[7px]" /></div>
      <X className="mt-[9px] size-[6px]" />
      <span className="mt-auto flex h-[11px] justify-center">
        <svg viewBox="0 0 8 8" className="size-[8px]" fill="none" stroke="#555"><circle cx="4" cy="4" r="2" /><path d="M4 0v2M4 6v2M0 4h2M6 4h2" /></svg>
      </span>
      <div className="flex h-[520px] flex-col bg-black">
        <div className="h-[18px] bg-[#241c1c] pr-px text-right text-[6px] leading-[9px] text-white">AM<br />024</div>
      </div>
    </aside>
  );
}

export default function App() {
  return (
    <div className="flex h-screen overflow-hidden bg-[#f0f0f0] font-['Open_Sans','Noto_Sans',sans-serif]">
      <BackWindow />
      <main className="flex min-w-0 flex-1 flex-col">
        <TitleBar />
        <Tabs />
        <Ribbon />
        <FormulaBar />
        <Sheet />
        <SheetTabs />
        <StatusBar />
        <Taskbar />
      </main>
    </div>
  );
}
